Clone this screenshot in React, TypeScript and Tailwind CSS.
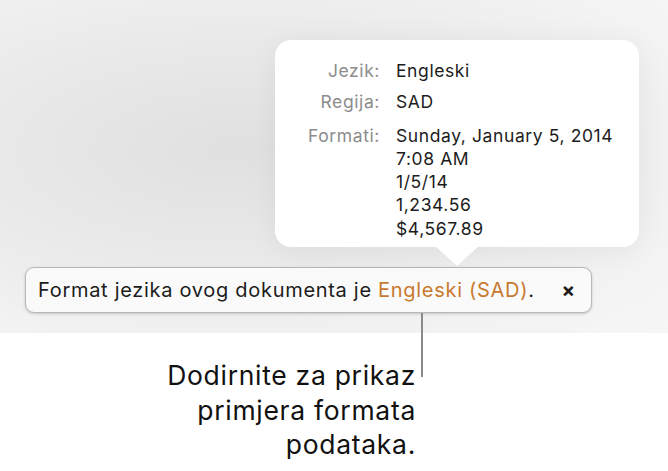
export default function App() {
  return (
    <div className="relative w-[668px] h-[471px] bg-white overflow-hidden font-['Inter',sans-serif] text-[#1c1c1c]">
      {/* grey app area */}
      <div className="relative h-[333px] pt-[267px] pl-[25px] bg-[radial-gradient(ellipse_at_35%_45%,#e0e0e0_0%,#eaeaea_45%,#f3f3f3_80%,#f6f6f6_100%)]">
        <div className="flex items-center w-[567px] h-[46px] pl-[12px] pr-[16px] rounded-[9px] bg-[#fafafa] border border-[#b8b8b8] shadow-[0_1px_3px_rgba(0,0,0,0.18)]">
          <span className="text-[20px] leading-none tracking-[0.7px]">
            Format jezika ovog dokumenta je <span className="text-[#c8792f]">Engleski (SAD)</span>.
          </span>
          <span className="ml-auto text-[20px] font-bold leading-none">×</span>
        </div>

        {/* popover */}
        <div className="absolute left-[275px] top-[40px] w-[364px] h-[207px] rounded-[16px] bg-white shadow-[0_4px_30px_rgba(0,0,0,0.06)]">
          <div className="absolute left-[159px] top-[205px] w-0 h-0 border-l-[23px] border-r-[23px] border-t-[21px] border-l-transparent border-r-transparent border-t-white" />
          <div className="grid grid-cols-[105px_1fr] gap-x-[16px] pt-[19px] text-[17.5px] leading-[23.3px] tracking-[0.6px]">
            <span className="text-right text-[#8c8c8c]">Jezik:</span>
            <span>Engleski</span>
            <span className="text-right text-[#8c8c8c] mt-[8px]">Regija:</span>
            <span className="mt-[8px]">SAD</span>
            <span className="text-right text-[#8c8c8c] mt-[10px]">Formati:</span>
            <div className="mt-[10px] flex flex-col">
              <span>Sunday, January 5, 2014</span>
              <span>7:08 AM</span>
              <span>1/5/14</span>
              <span>1,234.56</span>
              <span>$4,567.89</span>
            </div>
          </div>
        </div>
      </div>

      {/* leader line */}
      <div className="absolute left-[421px] top-[313px] w-[2px] h-[64px] bg-[#8a8a8a]" />

      <div className="w-[416px] mt-[25px] text-right text-[26.5px] leading-[34.5px] text-[#111] tracking-[0.7px]">
        <p>Dodirnite za prikaz</p>
        <p>primjera formata</p>
        <p>podataka.</p>
      </div>
    </div>
  );
}
